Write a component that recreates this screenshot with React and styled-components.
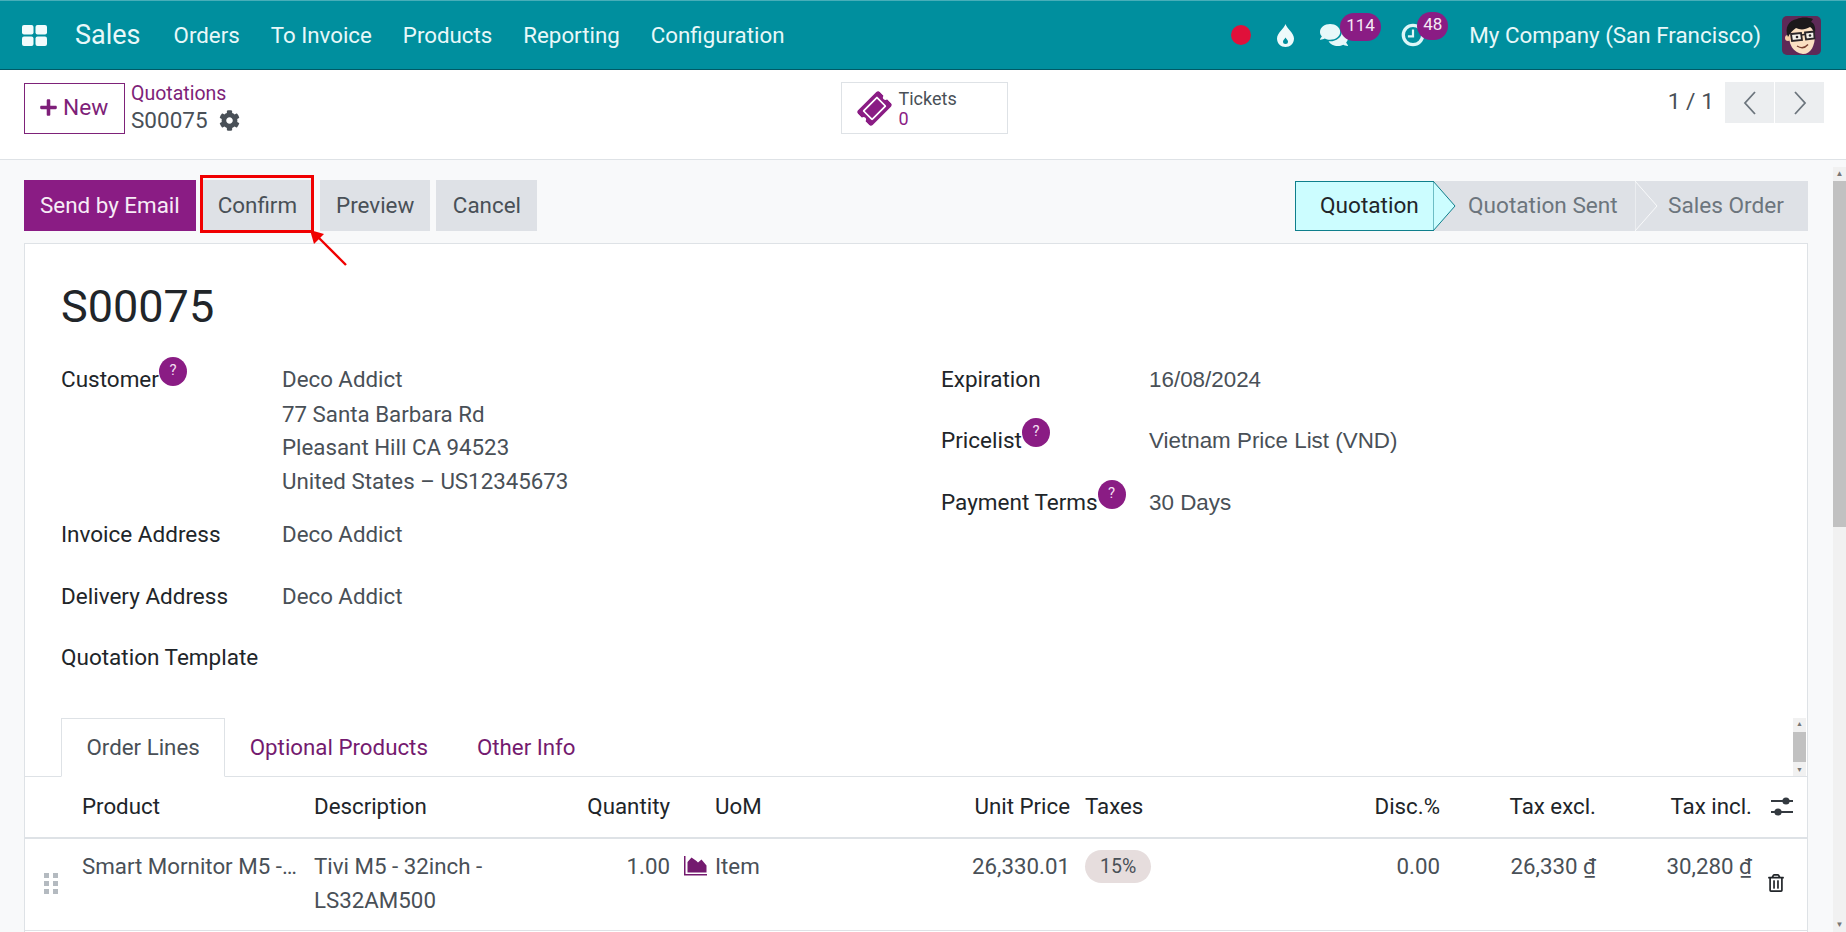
import React from "react";
import styled, { createGlobalStyle } from "styled-components";
import {
  FaCog,
  FaPlus,
  FaComments,
  FaTicketAlt,
  FaRegTrashAlt,
} from "react-icons/fa";

const GlobalStyle = createGlobalStyle`
  html, body {
    margin: 0;
    height: 100%;
    overflow: hidden;
    background: #f8f9fa;
    font-family: Roboto, "Liberation Sans", sans-serif;
    font-size: 22.3px;
    color: #212529;
  }
  * { box-sizing: border-box; }
`;

const Page = styled.div`
  display: flex;
  flex-direction: column;
  height: 932px;
  overflow: hidden;
`;

/* top navbar */
const Navbar = styled.header`
  display: flex;
  align-items: center;
  flex: none;
  height: 70px;
  padding: 0 25px 0 22px;
  background: #008f9e;
  border-top: 1px solid #47aeb9;
  border-bottom: 1px solid #005a66;
  color: #e8f8f9;
`;

const AppBrand = styled.span`
  margin: 0 33px 0 28px;
  font-size: 27px;
`;

const NavMenu = styled.nav`
  display: flex;
  gap: 31px;
  font-size: 22.3px;
`;

const Systray = styled.div`
  display: flex;
  align-items: center;
  margin-left: auto;
`;

const RecordDot = styled.span`
  width: 20px;
  height: 20px;
  border-radius: 50%;
  background: #e0103a;
  margin-right: 26px;
`;

const TrayIcon = styled.span`
  position: relative;
  display: flex;
  width: ${(p) => p.$width}px;
  margin-right: ${(p) => p.$gap}px;
  font-size: ${(p) => p.$size}px;
`;

const Counter = styled.span`
  position: absolute;
  left: ${(p) => p.$left}px;
  top: ${(p) => p.$top}px;
  height: 28px;
  padding: 0 6px;
  min-width: 30px;
  border-radius: 14px;
  background: #8a1c84;
  color: #f5e9f4;
  font-size: 17px;
  line-height: 24px;
  text-align: center;
`;

const CompanyName = styled.span`
  font-size: 22.4px;
  margin-right: 21px;
  white-space: nowrap;
`;

/* breadcrumb + pager strip */
const ControlPanel = styled.div`
  display: grid;
  grid-template-columns: 1fr auto 1fr;
  flex: none;
  height: 90px;
  padding: 12px 22px 0 24px;
  background: #fff;
  border-bottom: 1px solid #dee2e6;
`;

const LeftControls = styled.div`
  display: flex;
  gap: 6px;
  padding-top: 1px;
`;

const NewButton = styled.button`
  display: flex;
  align-items: center;
  gap: 5px;
  width: 101px;
  height: 51px;
  padding: 0 0 2px 14px;
  background: #fff;
  border: 1px solid #7e2279;
  color: #7e1f79;
  font: inherit;
  font-size: 22.7px;
`;

const Breadcrumb = styled.div`
  display: flex;
  flex-direction: column;
  margin-top: -1px;
`;

const CrumbLink = styled.a`
  color: #7e1f79;
  font-size: 19.5px;
  line-height: 24px;
`;

const CrumbCurrent = styled.div`
  display: flex;
  align-items: center;
  gap: 11px;
  margin-top: -1px;
  color: #495057;
  font-size: 22.5px;
  line-height: 30px;
`;

const StatButton = styled.div`
  display: flex;
  align-items: center;
  gap: 9px;
  width: 167px;
  height: 52px;
  padding-left: 17px;
  border: 1px solid #dee2e6;
  color: #8a1c84;
`;

const StatText = styled.div`
  display: flex;
  flex-direction: column;
  padding-top: 2px;
  font-size: 18px;
  line-height: 20px;
  color: #495057;
`;

const StatValue = styled.span`
  color: #8a1c84;
`;

const Pager = styled.div`
  display: flex;
  justify-content: flex-end;
  align-items: flex-start;
  color: #495057;
`;

const PagerCount = styled.span`
  margin-right: 11px;
  font-size: 22.8px;
  line-height: 40px;
`;

const PagerButton = styled.span`
  display: flex;
  align-items: center;
  justify-content: center;
  width: 49px;
  height: 41px;
  margin-left: ${(p) => (p.$joined ? 1 : 0)}px;
  background: #eceef0;
`;

/* scrolling area */
const Content = styled.div`
  display: flex;
  flex: 1;
  min-height: 0;
`;

const Main = styled.main`
  flex: 1;
  min-width: 0;
  padding: 20px 25px 0 24px;
`;

const ActionBar = styled.div`
  display: flex;
  justify-content: space-between;
  height: 51px;
`;

const Buttons = styled.div`
  display: flex;
  gap: 6px;
`;

const ActionButton = styled.button`
  height: 51px;
  padding: 0 ${(p) => p.$pad || 16}px 2px;
  border: 0;
  background: ${(p) => (p.$primary ? "#8a1c84" : "#dee1e6")};
  color: ${(p) => (p.$primary ? "#f7ecf6" : "#495057")};
  font: inherit;
  font-size: 22.4px;
`;

const Annotated = styled.div`
  position: relative;
  display: flex;
  margin-right: 1px;
  &::after {
    content: "";
    position: absolute;
    inset: -5px -1px -2px -2px;
    border: 3px solid #f00000;
    pointer-events: none;
  }
`;

const AnnotationArrow = styled.svg`
  position: absolute;
  left: 108px;
  top: 50px;
  z-index: 2;
`;

const StatusBar = styled.div`
  display: flex;
  margin-top: 1px;
  height: 50px;
  font-size: 22.6px;
`;

const StatusStep = styled.div`
  position: relative;
  display: flex;
  align-items: center;
  width: ${(p) => p.$width}px;
  padding-left: ${(p) => p.$pad}px;
  padding-bottom: 2px;
  background: ${(p) => (p.$active ? "#ccfdff" : "#dee1e6")};
  border: ${(p) => (p.$active ? "1px solid #0f7f8c" : "0")};
  color: ${(p) => (p.$active ? "#212529" : "#6c757d")};
  white-space: nowrap;
`;

const StepArrow = styled.svg`
  position: absolute;
  left: 100%;
  top: ${(p) => (p.$active ? -1 : 0)}px;
  z-index: 1;
`;

const Sheet = styled.section`
  margin-top: 12px;
  height: 720px;
  background: #fff;
  border: 1px solid #dee2e6;
`;

const SheetBody = styled.div`
  padding: 36px 36px 0;
  height: 474px;
`;

const Title = styled.h1`
  margin: 0 0 28px;
  font-size: 45px;
  font-weight: 400;
  line-height: 54px;
`;

const Groups = styled.div`
  display: grid;
  grid-template-columns: 880px 1fr;
`;

const Field = styled.div`
  display: grid;
  grid-template-columns: ${(p) => p.$label}px 1fr;
  margin-bottom: ${(p) => p.$after}px;
  line-height: 34px;
`;

const FieldLabel = styled.div`
  position: relative;
  white-space: nowrap;
  font-size: 22.5px;
`;

const HelpBadge = styled.span`
  display: inline-block;
  vertical-align: top;
  width: 28px;
  height: 29px;
  margin-top: -5px;
  border-radius: 50%;
  background: #8a1c84;
  color: #f3dff1;
  font-size: 15px;
  line-height: 26px;
  text-align: center;
`;

const FieldValue = styled.div`
  color: #495057;
  padding-top: ${(p) => (p.$input ? 1 : 0)}px;
  font-family: ${(p) => (p.$input ? '"Liberation Sans", Arial, sans-serif' : "inherit")};
  font-size: ${(p) => (p.$input ? "22.4px" : "inherit")};
`;

const AddressLine = styled.div`
  height: ${(p) => p.$height}px;
`;

const TabStrip = styled.div`
  display: flex;
  height: 59px;
  padding-left: 36px;
  border-bottom: 1px solid #dee2e6;
`;

const Tab = styled.a`
  height: 59px;
  padding: 0 ${(p) => (p.$active ? 24.5 : 23.5)}px;
  border: 1px solid ${(p) => (p.$active ? "#dee2e6" : "transparent")};
  border-bottom: 1px solid ${(p) => (p.$active ? "#fff" : "transparent")};
  color: ${(p) => (p.$active ? "#495057" : "#741a6f")};
  line-height: 56px;
`;

const MiniScroll = styled.div`
  display: flex;
  flex-direction: column;
  align-items: center;
  justify-content: space-between;
  width: 13px;
  height: 58px;
  margin: 0 1px 0 auto;
  background: #f1f1f1;
  color: #777;
  font-size: 7px;
  line-height: 12px;
`;

const MiniThumb = styled.div`
  flex: 1;
  align-self: stretch;
  max-height: 30px;
  background: #c1c1c1;
`;

const TableGrid = styled.div`
  display: grid;
  grid-template-columns: 57px 232px 273px 83px 45px 185px 170px 230px 140px 156px 156px 55px;
  height: ${(p) => p.$height}px;
  border-bottom: ${(p) => p.$rule}px solid #dee2e6;
  color: ${(p) => (p.$head ? "#212529" : "#495057")};
  line-height: ${(p) => (p.$head ? "59px" : "34px")};
`;

const Cell = styled.div`
  padding-top: ${(p) => p.$top || 0}px;
  padding-left: ${(p) => p.$left || 0}px;
  padding-right: ${(p) => p.$right || 0}px;
  text-align: ${(p) => (p.$end ? "right" : "left")};
  min-width: 0;
  white-space: ${(p) => (p.$nowrap ? "nowrap" : "normal")};
`;

const TaxTag = styled.span`
  display: inline-block;
  vertical-align: top;
  height: 33px;
  padding: 0 15px;
  border-radius: 17px;
  background: #e6dddd;
  font-size: 19.5px;
  line-height: 34px;
`;

const Handle = styled.div`
  display: grid;
  grid-template-columns: repeat(2, 5px);
  grid-auto-rows: 5px;
  gap: 3px 4px;
  width: 14px;
`;

const HandleDot = styled.span`
  background: #b4bac0;
`;

const CellIcon = styled.span`
  display: flex;
  color: ${(p) => p.$color};
  font-size: 22px;
`;

/* window scrollbar */
const Scrollbar = styled.div`
  display: flex;
  flex-direction: column;
  align-items: center;
  flex: none;
  width: 13px;
  margin-top: 7px;
  background: #f1f1f1;
  color: #777;
  font-size: 8px;
`;

const ScrollArrow = styled.span`
  height: 14px;
  line-height: 14px;
`;

const ScrollThumb = styled.div`
  align-self: stretch;
  height: 346px;
  background: #c1c1c1;
`;

const ScrollFill = styled.div`
  flex: 1;
`;

const AppsIcon = () => (
  <svg width="25" height="21" viewBox="0 0 25 21" fill="#f2fbfc">
    <rect x="0" y="0" width="11.5" height="9.5" rx="2" />
    <rect x="13.5" y="0" width="11.5" height="9.5" rx="2" />
    <rect x="0" y="11.5" width="11.5" height="9.5" rx="2" />
    <rect x="13.5" y="11.5" width="11.5" height="9.5" rx="2" />
  </svg>
);

const DropIcon = () => (
  <svg width="17" height="23" viewBox="0 0 17 23">
    <path d="M8.5 0c1 4 8.5 9 8.5 14.5C17 19.5 13 23 8.5 23S0 19.5 0 14.5C0 9 7.5 4 8.5 0z" fill="#eefafb" />
    <path d="M8.5 13.5c.6 1.5 2.5 2.5 2.5 4a2.5 2.5 0 0 1-5 0c0-1.5 1.9-2.5 2.5-4z" fill="#008f9e" />
  </svg>
);

const ClockIcon = () => (
  <svg width="26" height="26" viewBox="0 0 26 26" fill="none" stroke="#dcf6f8">
    <circle cx="13" cy="13" r="10.5" strokeWidth="3.6" />
    <path d="M13 7v7.5H7.5" strokeWidth="2.4" />
  </svg>
);

const Avatar = () => (
  <svg width="39" height="39" viewBox="0 0 39 39">
    <rect width="39" height="39" rx="5" fill="#5e2a57" />
    <path d="M7 16c-1 12 4 21 14 22 8 0 12-8 12-20L28 9 12 10z" fill="#fbe0c2" />
    <circle cx="6" cy="22" r="3" fill="#f6cfa8" />
    <path d="M6 21C2 12 7 4 15 3c4-2 11-2 16 0l-2 3c3 1 5 5 4 11-2-3-3-5-5-6-5 3-10 3-14 1-3 2-6 5-8 9z" fill="#1c191b" />
    <g fill="#f4f1ea" stroke="#2a2528" strokeWidth="1.8">
      <path d="M9 18l10-1 1 7-10 1z" />
      <path d="M23 16.5l9-1 .5 7-8.5 1z" />
    </g>
    <path d="M20 19l3-.8" stroke="#2a2528" strokeWidth="1.6" />
    <circle cx="15" cy="21" r="1.3" fill="#2a2528" />
    <circle cx="28" cy="19.5" r="1.3" fill="#2a2528" />
    <path d="M15 30c4 2.5 8 2 11-1.5" fill="none" stroke="#7a4030" strokeWidth="1.4" />
  </svg>
);

const Chevron = ({ flip }) => (
  <svg width="14" height="24" viewBox="0 0 14 24" fill="none" stroke="#6c757d" strokeWidth="1.8">
    <path d={flip ? "M2 1l10 11L2 23" : "M12 1L2 12l10 11"} />
  </svg>
);

const SlidersIcon = () => (
  <svg width="22" height="19" viewBox="0 0 22 19" fill="#343a40">
    <rect x="0" y="3" width="22" height="2" />
    <circle cx="15" cy="4" r="3.6" />
    <rect x="0" y="14" width="22" height="2" />
    <circle cx="7" cy="15" r="3.6" />
  </svg>
);

const AreaChartIcon = () => (
  <svg width="23" height="21" viewBox="0 0 23 21" fill="#741a6f">
    <path d="M0 1h1.5v18H23v1.5H0z" />
    <path d="M3.5 17.5V7l4-4.5 5 3.5 1.5 1.5 3.5-3 5 6v7z" />
  </svg>
);

const TicketIcon = () => (
  <FaTicketAlt size={31} style={{ transform: "rotate(-45deg)" }} />
);

const Arrowhead = ({ active }) => (
  <StepArrow $active={active} width="23" height="50" viewBox="0 0 23 50">
    <path
      d="M0 0l22 25L0 50z"
      fill={active ? "#ccfdff" : "#dee1e6"}
      stroke={active ? "#0f7f8c" : "#f8f9fa"}
      strokeWidth="1"
    />
  </StepArrow>
);

const navItems = ["Orders", "To Invoice", "Products", "Reporting", "Configuration"];
const addressLines = [
  ["Deco Addict", 35],
  ["77 Santa Barbara Rd", 33],
  ["Pleasant Hill CA 94523", 34],
  ["United States – US12345673", 34],
];

export default function App() {
  return (
    <Page>
      <GlobalStyle />
      <Navbar>
        <AppsIcon />
        <AppBrand>Sales</AppBrand>
        <NavMenu>
          {navItems.map((item) => (
            <span key={item}>{item}</span>
          ))}
        </NavMenu>
        <Systray>
          <RecordDot />
          <TrayIcon $width={17} $gap={26} $size={23}>
            <DropIcon />
          </TrayIcon>
          <TrayIcon $width={28} $gap={53} $size={28}>
            <FaComments />
            <Counter $left={20} $top={-8}>114</Counter>
          </TrayIcon>
          <TrayIcon $width={24} $gap={44} $size={24}>
            <ClockIcon />
            <Counter $left={16} $top={-10}>48</Counter>
          </TrayIcon>
          <CompanyName>My Company (San Francisco)</CompanyName>
          <Avatar />
        </Systray>
      </Navbar>

      <ControlPanel>
        <LeftControls>
          <NewButton>
            <FaPlus size={19} />
            New
          </NewButton>
          <Breadcrumb>
            <CrumbLink>Quotations</CrumbLink>
            <CrumbCurrent>
              S00075
              <FaCog size={21} />
            </CrumbCurrent>
          </Breadcrumb>
        </LeftControls>
        <StatButton>
          <TicketIcon />
          <StatText>
            Tickets
            <StatValue>0</StatValue>
          </StatText>
        </StatButton>
        <Pager>
          <PagerCount>1 / 1</PagerCount>
          <PagerButton>
            <Chevron />
          </PagerButton>
          <PagerButton $joined>
            <Chevron flip />
          </PagerButton>
        </Pager>
      </ControlPanel>

      <Content>
        <Main>
          <ActionBar>
            <Buttons>
              <ActionButton $primary>Send by Email</ActionButton>
              <Annotated>
                <ActionButton>Confirm</ActionButton>
                <AnnotationArrow width="38" height="36" viewBox="0 0 38 36">
                  <path d="M36 35L6 5" stroke="#f00000" strokeWidth="2.4" />
                  <path d="M0 0l14 4-10 10z" fill="#f00000" />
                </AnnotationArrow>
              </Annotated>
              <ActionButton>Preview</ActionButton>
              <ActionButton $pad={16.5}>Cancel</ActionButton>
            </Buttons>
            <StatusBar>
              <StatusStep $active $width={139} $pad={24}>
                Quotation
                <Arrowhead active />
              </StatusStep>
              <StatusStep $width={201} $pad={34}>
                Quotation Sent
                <Arrowhead />
              </StatusStep>
              <StatusStep $width={173} $pad={33}>
                Sales Order
              </StatusStep>
            </StatusBar>
          </ActionBar>

          <Sheet>
            <SheetBody>
              <Title>S00075</Title>
              <Groups>
                <div>
                  <Field $label={221} $after={19}>
                    <FieldLabel>
                      Customer<HelpBadge>?</HelpBadge>
                    </FieldLabel>
                    <FieldValue>
                      {addressLines.map(([line, height]) => (
                        <AddressLine key={line} $height={height}>
                          {line}
                        </AddressLine>
                      ))}
                    </FieldValue>
                  </Field>
                  <Field $label={221} $after={28}>
                    <FieldLabel>Invoice Address</FieldLabel>
                    <FieldValue>Deco Addict</FieldValue>
                  </Field>
                  <Field $label={221} $after={27}>
                    <FieldLabel>Delivery Address</FieldLabel>
                    <FieldValue>Deco Addict</FieldValue>
                  </Field>
                  <Field $label={221} $after={0}>
                    <FieldLabel>Quotation Template</FieldLabel>
                  </Field>
                </div>
                <div>
                  <Field $label={208} $after={26}>
                    <FieldLabel>Expiration</FieldLabel>
                    <FieldValue $input>16/08/2024</FieldValue>
                  </Field>
                  <Field $label={208} $after={27}>
                    <FieldLabel>
                      Pricelist<HelpBadge>?</HelpBadge>
                    </FieldLabel>
                    <FieldValue $input>Vietnam Price List (VND)</FieldValue>
                  </Field>
                  <Field $label={208} $after={0}>
                    <FieldLabel>
                      Payment Terms<HelpBadge>?</HelpBadge>
                    </FieldLabel>
                    <FieldValue $input>30 Days</FieldValue>
                  </Field>
                </div>
              </Groups>
            </SheetBody>

            <TabStrip>
              <Tab $active>Order Lines</Tab>
              <Tab>Optional Products</Tab>
              <Tab>Other Info</Tab>
              <MiniScroll>
                ▲
                <MiniThumb />
                ▼
              </MiniScroll>
            </TabStrip>

            <TableGrid $head $height={62} $rule={2}>
              <Cell />
              <Cell>Product</Cell>
              <Cell>Description</Cell>
              <Cell $end>Quantity</Cell>
              <Cell />
              <Cell>UoM</Cell>
              <Cell $end>Unit Price</Cell>
              <Cell $left={15}>Taxes</Cell>
              <Cell $end>Disc.%</Cell>
              <Cell $end>Tax excl.</Cell>
              <Cell $end>Tax incl.</Cell>
              <Cell $left={19} $top={20}>
                <CellIcon>
                  <SlidersIcon />
                </CellIcon>
              </Cell>
            </TableGrid>

            <TableGrid $height={92} $rule={1}>
              <Cell $left={19} $top={34}>
                <Handle>
                  {[0, 1, 2, 3, 4, 5].map((dot) => (
                    <HandleDot key={dot} />
                  ))}
                </Handle>
              </Cell>
              <Cell $top={10} $nowrap>
                Smart Mornitor M5 -…
              </Cell>
              <Cell $top={10} $right={30}>
                Tivi M5 - 32inch - LS32AM500
              </Cell>
              <Cell $top={10} $end>
                1.00
              </Cell>
              <Cell $top={16} $left={14}>
                <CellIcon>
                  <AreaChartIcon />
                </CellIcon>
              </Cell>
              <Cell $top={10}>Item</Cell>
              <Cell $top={10} $end>
                26,330.01
              </Cell>
              <Cell $top={11} $left={15}>
                <TaxTag>15%</TaxTag>
              </Cell>
              <Cell $top={10} $end>
                0.00
              </Cell>
              <Cell $top={10} $end>
                26,330 ₫
              </Cell>
              <Cell $top={10} $end>
                30,280 ₫
              </Cell>
              <Cell $top={35} $left={15}>
                <CellIcon $color="#212529">
                  <FaRegTrashAlt size={18} />
                </CellIcon>
              </Cell>
            </TableGrid>
          </Sheet>
        </Main>

        <Scrollbar>
          <ScrollArrow>▲</ScrollArrow>
          <ScrollThumb />
          <ScrollFill />
          <ScrollArrow>▼</ScrollArrow>
        </Scrollbar>
      </Content>
    </Page>
  );
}
